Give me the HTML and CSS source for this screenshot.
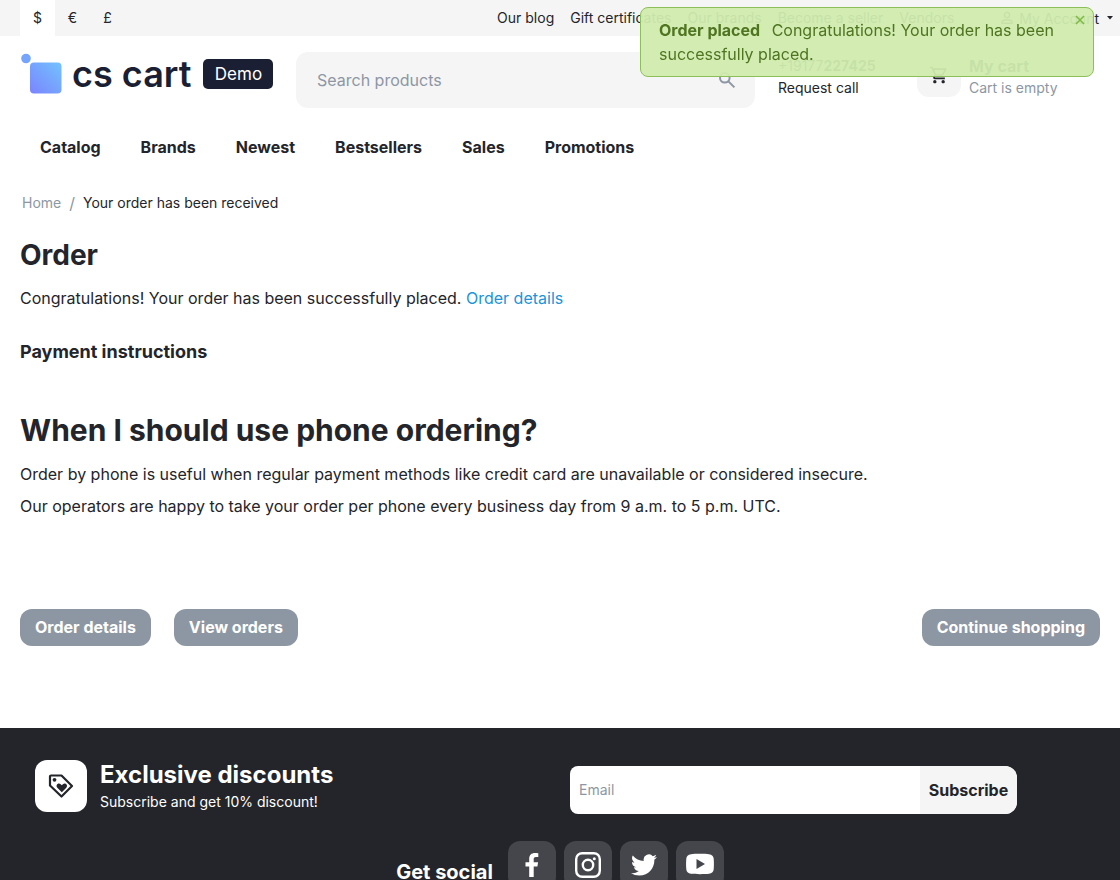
FILE: index.html
```
<!DOCTYPE html>
<html lang="en">
<head>
    <meta charset="UTF-8">
    <meta name="viewport" content="width=device-width, initial-scale=1.0">
    <title>Your order has been received</title>
    <link rel="stylesheet" href="styles.css">
</head>
<body>
<div class="top-bar">
    <div class="currencies">
        <button type="button" class="active">$</button>
        <button type="button">€</button>
        <button type="button">£</button>
    </div>
    <nav class="top-links">
        <a href="#">Our blog</a>
        <a href="#">Gift certificates</a>
        <a href="#">Our brands</a>
        <a href="#">Become a seller</a>
        <a href="#">Vendors</a>
    </nav>
    <button type="button" class="account">
        <svg width="14" height="14" viewBox="0 0 14 14" fill="none" stroke="currentColor" stroke-width="1.4"><circle cx="7" cy="4" r="2.6"/><path d="M2 12.3v-1.2C2 9.500 4.500 8.700 7 8.700s5 .8 5 2.400v1.200z"/></svg>
        My Account
        <svg class="caret" width="6" height="4" viewBox="0 0 6 4"><path d="M0 0h6L3 3.500z" fill="currentColor"/></svg>
    </button>
</div>

<header class="header">
    <a href="#" class="logo">
        <svg width="42" height="42" viewBox="0 0 42 42">
            <defs>
                <linearGradient id="logoFill" x1="0" y1="1" x2="1" y2="0">
                    <stop offset="0" stop-color="#7b84ff"/>
                    <stop offset="1" stop-color="#72c2ff"/>
                </linearGradient>
            </defs>
            <circle cx="6" cy="5.500" r="4.800" fill="#75a4fc"/>
            <rect x="10" y="9.500" width="31.500" height="31" rx="4" fill="url(#logoFill)"/>
        </svg>
        <span class="logo-name">cs cart</span>
        <span class="logo-badge">Demo</span>
    </a>
    <form class="search">
        <input type="text" aria-label="Search products" placeholder="Search products">
        <button type="button" aria-label="Search">
            <svg width="18" height="18" viewBox="0 0 18 18" fill="none" stroke="currentColor" stroke-width="2"><circle cx="6.800" cy="6.800" r="4.800"/><path d="M10.400 10.400l6 6"/></svg>
        </button>
    </form>
    <div class="phone">
        <span>+19177<strong>227425</strong></span>
        <a href="#">Request call</a>
    </div>
    <a href="#" class="cart">
        <span class="cart-icon">
            <svg width="20" height="20" viewBox="0 0 24 24" fill="currentColor"><path d="M15.550 13c.75 0 1.410-.41 1.750-1.030l3.580-6.490A.996.996 0 0 0 20.010 4H5.210l-.94-2H1v2h2l3.600 7.590-1.350 2.440C4.520 15.370 5.480 17 7 17h12v-2H7l1.100-2h7.450zM6.160 6h12.150l-2.760 5H8.530L6.160 6zM7 18c-1.100 0-1.990.9-1.990 2S5.900 22 7 22s2-.9 2-2-.9-2-2-2zm10 0c-1.100 0-1.990.9-1.990 2s.89 2 1.990 2 2-.9 2-2-.9-2-2-2z"/></svg>
        </span>
        <span class="cart-text">
            <strong>My cart</strong>
            <span>Cart is empty</span>
        </span>
    </a>
</header>

<nav class="menu">
    <a href="#">Catalog</a>
    <a href="#">Brands</a>
    <a href="#">Newest</a>
    <a href="#">Bestsellers</a>
    <a href="#">Sales</a>
    <a href="#">Promotions</a>
</nav>

<main class="content">
    <div class="breadcrumbs">
        <a href="#">Home</a>
        <span class="slash">/</span>
        <span>Your order has been received</span>
    </div>
    <h1>Order</h1>
    <p>Congratulations! Your order has been successfully placed. <a href="#">Order details</a></p>
    <h4>Payment instructions</h4>
    <h2>When I should use phone ordering?</h2>
    <p>Order by phone is useful when regular payment methods like credit card are unavailable or considered insecure.</p>
    <p>Our operators are happy to take your order per phone every business day from 9 a.m. to 5 p.m. UTC.</p>
    <div class="buttons">
        <button type="button">Order details</button>
        <button type="button">View orders</button>
        <button type="button" class="continue">Continue shopping</button>
    </div>
</main>

<footer class="footer">
    <div class="subscribe">
        <div class="discount">
            <span class="discount-icon">
                <svg width="26" height="26" viewBox="0 0 26 26">
                    <path d="M3 2.500h10.500L24 13 13.500 23.500 2 12.500v-9a1 1 0 0 1 1-1z" fill="none" stroke="currentColor" stroke-width="2.200" stroke-linejoin="round"/>
                    <circle cx="6.500" cy="6.800" r="1.900" fill="currentColor"/>
                    <path d="M13.800 19.300l-4.500-4.500c-2.200-2.400.8-5.600 3.400-3.600l1.100 1 1.100-1c2.600-2 5.600 1.200 3.400 3.600z" fill="currentColor"/>
                </svg>
            </span>
            <div>
                <h3>Exclusive discounts</h3>
                <p>Subscribe and get 10% discount!</p>
            </div>
        </div>
        <form class="email-form">
            <input type="email" aria-label="Email" placeholder="Email">
            <button type="button">Subscribe</button>
        </form>
    </div>
    <div class="social">
        <h4>Get social</h4>
        <a href="#" aria-label="Facebook">
            <svg width="30" height="30" viewBox="0 0 30 30" fill="currentColor"><path d="M12.200 27V16.500H8.500v-4.300h3.700V9c0-4 2.200-6 5.800-6 1.500 0 2.800.1 3.300.2v3.900h-2.400c-1.800 0-2.200 1-2.200 2.200v2.900h4.400l-.7 4.300h-3.700V27z"/></svg>
        </a>
        <a href="#" aria-label="Instagram">
            <svg width="30" height="30" viewBox="0 0 30 30" fill="none" stroke="currentColor" stroke-width="2.400"><rect x="3.200" y="3.200" width="23.600" height="23.600" rx="6"/><circle cx="15" cy="15" r="5.200"/><circle cx="21.300" cy="8.700" r="1.500" fill="currentColor" stroke="none"/></svg>
        </a>
        <a href="#" aria-label="Twitter">
            <svg width="26" height="26" viewBox="0 0 24 24" fill="currentColor"><path d="M23.950 4.570a10 10 0 0 1-2.820.77 4.960 4.960 0 0 0 2.160-2.720c-.95.56-2 .97-3.120 1.190a4.920 4.920 0 0 0-8.390 4.480A13.930 13.930 0 0 1 1.640 3.160a4.920 4.920 0 0 0 1.520 6.570 4.900 4.900 0 0 1-2.230-.61v.06a4.920 4.920 0 0 0 3.950 4.830 5 5 0 0 1-2.210.08 4.940 4.940 0 0 0 4.600 3.420A9.870 9.870 0 0 1 0 19.540a14 14 0 0 0 7.550 2.210c9.050 0 14-7.500 14-13.980l-.02-.64a9.940 9.940 0 0 0 2.420-2.560z"/></svg>
        </a>
        <a href="#" aria-label="YouTube">
            <svg width="30" height="30" viewBox="0 0 30 30"><path d="M6 4.200c4-.5 14-.5 18 0 3 .4 4.500 2 4.700 4.600.3 3 .3 7.400 0 10.400-.2 2.600-1.700 4.200-4.700 4.600-4 .5-14 .5-18 0-3-.4-4.500-2-4.700-4.600-.3-3-.3-7.400 0-10.400C1.500 6.200 3 4.600 6 4.200z" fill="currentColor"/><path d="M11.500 9v10l8.500-5z" fill="#44464b"/></svg>
        </a>
    </div>
</footer>

<div class="notification" role="alert">
    <button type="button" aria-label="Close">
        <svg width="10" height="10" viewBox="0 0 10 10" stroke="currentColor" stroke-width="1.600"><path d="M1 1l8 8M9 1L1 9"/></svg>
    </button>
    <strong>Order placed</strong>
    Congratulations! Your order has been successfully placed.
</div>
</body>
</html>
```
FILE: styles.css
```
* {
    box-sizing: border-box;
}

body {
    margin: 0;
    font-family: Inter, "Liberation Sans", sans-serif;
    font-size: 16px;
    line-height: 24px;
    color: #23252b;
    background-color: white;
}

a {
    color: inherit;
    text-decoration: none;
}

button,
input {
    font-family: inherit;
    color: inherit;
    border: none;
    padding: 0;
}

button {
    cursor: pointer;
    background: none;
}

svg {
    display: block;
    flex-shrink: 0;
}

h1, h2, h3, h4, p {
    margin: 0;
}

.top-bar {
    display: flex;
    align-items: center;
    height: 36px;
    padding: 0 7px 0 20px;
    background-color: #f5f5f5;
    font-size: 14px;
    white-space: nowrap;
}

.currencies {
    display: flex;
    margin-right: auto;
}

.currencies button {
    width: 35px;
    height: 36px;
    padding-bottom: 2px;
    font-size: 14px;
}

.currencies .active {
    background-color: white;
}

.top-links {
    display: flex;
    gap: 16px;
    margin-right: 46px;
}

.account {
    display: flex;
    align-items: center;
    gap: 5px;
    font-size: 14px;
}

.caret {
    margin-left: 3px;
}

.header {
    display: flex;
    padding: 16px 20px 0;
    white-space: nowrap;
}

.logo {
    display: flex;
    align-items: center;
    width: 276px;
    height: 44px;
}

.logo-name {
    margin-left: 10px;
    font-size: 36px;
    font-weight: 600;
    color: #1a1f33;
}

.logo-badge {
    margin-left: 12px;
    width: 70px;
    border-radius: 5px;
    background-color: #1a1f33;
    color: white;
    font-size: 17px;
    line-height: 30px;
    text-align: center;
}

.search {
    display: flex;
    align-items: center;
    flex: 1;
    min-width: 0;
    height: 56px;
    margin-right: 23px;
    padding: 0 19px 0 21px;
    border-radius: 12px;
    background-color: #f5f5f5;
}

.search input {
    flex: 1;
    min-width: 0;
    background: none;
    font-size: 16px;
}

.search button {
    color: #8d97a4;
}

input::placeholder {
    color: #8d97a4;
    opacity: 1;
}

.phone {
    display: flex;
    flex-direction: column;
    width: 139px;
    padding-top: 3px;
    font-size: 14px;
    line-height: 22px;
}

.cart {
    display: flex;
    gap: 8px;
    width: 183px;
}

.cart-icon {
    display: flex;
    align-items: center;
    justify-content: center;
    width: 44px;
    height: 44px;
    margin-top: 1px;
    border-radius: 12px;
    background-color: #f5f5f5;
}

.cart-text {
    display: flex;
    flex-direction: column;
    padding-top: 3px;
    font-size: 14px;
    line-height: 22px;
    color: #8d97a4;
}

.cart-text strong {
    font-size: 16px;
    color: #23252b;
}

.menu {
    display: flex;
    gap: 40px;
    padding: 27px 40px 0;
    font-weight: 700;
}

.content {
    padding: 32px 20px 82px;
}

.content p {
    margin-bottom: 8px;
}

.content p a {
    color: #1a94da;
}

.breadcrumbs {
    display: flex;
    padding-left: 2px;
    font-size: 14px;
    color: #23252b;
}

.breadcrumbs a,
.slash {
    color: #8d97a4;
}

.slash {
    margin: 0 8px;
    font-size: 16px;
}

h1 {
    margin: 20px 0 11px;
    font-size: 28px;
    line-height: 40px;
}

.content h4 {
    margin-top: 30px;
    font-size: 18px;
}

h2 {
    margin: 46px 0 12px;
    font-size: 30px;
    line-height: 40px;
}

.buttons {
    display: flex;
    gap: 23px;
    margin-top: 91px;
}

.buttons button {
    height: 37px;
    padding: 0 15px 2px;
    border-radius: 12px;
    background-color: #8d97a4;
    color: white;
    font-size: 16px;
    font-weight: 700;
}

.buttons .continue {
    margin-left: auto;
}

.footer {
    padding: 32px 20px 24px;
    background-color: #23252b;
    color: white;
}

.subscribe {
    display: grid;
    grid-template-columns: 1fr 1fr;
    column-gap: 20px;
    align-items: center;
    padding-bottom: 27px;
}

.discount {
    display: flex;
    gap: 13px;
    padding-left: 15px;
}

.discount-icon {
    display: flex;
    align-items: center;
    justify-content: center;
    width: 52px;
    height: 52px;
    border-radius: 12px;
    background-color: white;
    color: #23252b;
}

.discount h3 {
    font-size: 24px;
    line-height: 30px;
}

.discount p {
    font-size: 14px;
}

.email-form {
    display: flex;
    width: 447px;
    max-width: 100%;
    height: 48px;
    margin-top: 6px;
    border-radius: 8px 12px 12px 8px;
    background-color: white;
    overflow: hidden;
}

.email-form input {
    flex: 1;
    min-width: 0;
    padding: 0 9px 2px;
    background: none;
    color: #23252b;
    font-size: 14px;
}

.email-form button {
    width: 97px;
    background-color: #f5f5f5;
    color: #23252b;
    font-size: 16px;
    font-weight: 700;
}

.social {
    display: flex;
    justify-content: center;
    gap: 8px;
}

.social h4 {
    margin-right: 7px;
    padding-top: 19px;
    font-size: 20px;
}

.social a {
    display: flex;
    align-items: center;
    justify-content: center;
    width: 48px;
    height: 48px;
    border-radius: 12px;
    background-color: #44464b;
}

.notification {
    position: fixed;
    top: 7px;
    right: 26px;
    width: 454px;
    padding: 10px 36px 10px 18px;
    border: 1px solid #8cbf58;
    border-radius: 8px;
    background-color: rgba(208, 235, 174, 0.95);
    color: #4f7521;
}

.notification strong {
    margin-right: 7px;
}

.notification button {
    position: absolute;
    top: 7px;
    right: 8px;
    color: #7fba45;
}
```
